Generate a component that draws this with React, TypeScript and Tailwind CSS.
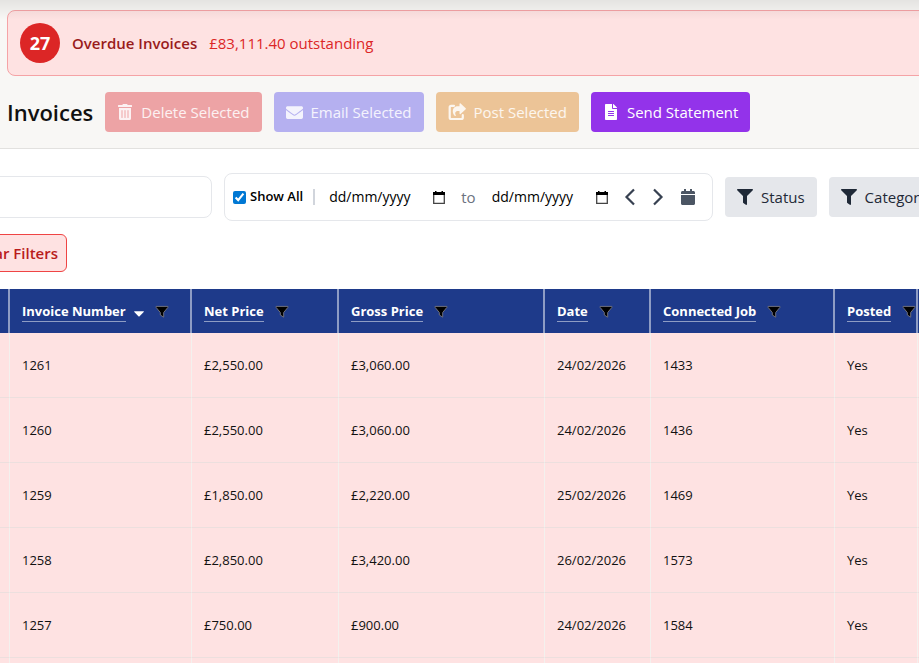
import { useState } from "react";
import { FaCalendar, FaEnvelope, FaFileAlt, FaFilter, FaTrashAlt } from "react-icons/fa";

const ShareIcon = ({ size }: { size: number }) => (
  <svg width={size} height={size} viewBox="0 0 18 18" className="block">
    <path
      d="M6 2.800H3.200a1.500 1.500 0 0 0-1.500 1.500v10.200a1.500 1.500 0 0 0 1.500 1.500h10.100a1.500 1.500 0 0 0 1.500-1.500v-2.300"
      fill="none"
      stroke="currentColor"
      strokeWidth="2.200"
      strokeLinecap="round"
    />
    <path
      d="M11.500 0.900c0-.6.700-.9 1.100-.5l5.100 4.800c.3.300.3.700 0 1l-5.100 4.800c-.4.400-1.100.1-1.100-.5V8.100H10c-2.400 0-3.500 1.700-2.200 4.300.2.500-.3.800-.7.500C5.700 11.900 4.800 10.200 4.800 8.400c0-3.200 2.200-5.100 5.200-5.100h1.500z"
      fill="currentColor"
    />
  </svg>
);

const actions = [
  { label: "Delete Selected", icon: FaTrashAlt, size: 16, color: "bg-[#eda3a5] text-white/85", disabled: true },
  { label: "Email Selected", icon: FaEnvelope, size: 17, color: "bg-[#b5b0f0] text-white/85", disabled: true },
  { label: "Post Selected", icon: ShareIcon, size: 18, color: "bg-[#ecc497] text-white/85", disabled: true },
  { label: "Send Statement", icon: FaFileAlt, size: 16, color: "bg-[#9333ea] text-white", disabled: false },
];

const columns = ["Invoice Number", "Net Price", "Gross Price", "Date", "Connected Job", "Posted"];

const invoices = [
  ["1261", "£2,550.00", "£3,060.00", "24/02/2026", "1433", "Yes"],
  ["1260", "£2,550.00", "£3,060.00", "24/02/2026", "1436", "Yes"],
  ["1259", "£1,850.00", "£2,220.00", "25/02/2026", "1469", "Yes"],
  ["1258", "£2,850.00", "£3,420.00", "26/02/2026", "1573", "Yes"],
  ["1257", "£750.00", "£900.00", "24/02/2026", "1584", "Yes"],
  ["", "", "", "", "", ""],
];

const ColumnFilterIcon = () => (
  <svg width="14" height="14" viewBox="0 0 14 14" className="block">
    <path
      d="M1.100 1.400h11.800v1L8.700 7.500v4.700L5.300 10V7.500L1.100 2.400z"
      fill="#000"
      stroke="#6f6f7a"
      strokeWidth="1"
      strokeLinejoin="round"
    />
  </svg>
);

const DateField = ({ label }: { label: string }) => {
  const [value, setValue] = useState("");

  return (
    <div className="flex w-[116px] items-center justify-between">
      <input
        type="text"
        aria-label={label}
        placeholder="dd/mm/yyyy"
        value={value}
        onChange={(e) => setValue(e.target.value)}
        className="w-[92px] text-sm text-black outline-none placeholder:text-black"
      />
      <button type="button" aria-label={`Pick ${label}`}>
        <svg width="12" height="13" viewBox="0 0 12 13" className="block">
          <path d="M.7 3v9.300h10.600V3" fill="#fff" stroke="#444" strokeWidth="1.300" />
          <path d="M2 0h1.500v1H8.500V0H10v1h2v3H0V1h2z" fill="#000" />
        </svg>
      </button>
    </div>
  );
};

const App = () => {
  const [showAll, setShowAll] = useState(true);

  return (
    <div className="relative h-screen overflow-hidden bg-white font-['Open_Sans','Noto_Sans',sans-serif] text-[15px] text-[#111]">
      <header className="border-b border-[#e2e1df] bg-[#f8f7f5] pt-[10px] pb-4 pl-[7px]">
        <div className="-mr-4 flex h-[66px] items-center rounded-lg border border-[#f5a3a6] bg-[#fee2e2] px-3">
          <span className="flex size-10 items-center justify-center rounded-full bg-[#dc2626] text-lg font-bold text-white">
            27
          </span>
          <span className="ml-3 font-semibold text-[#991b1b]">Overdue Invoices</span>
          <span className="ml-3 text-[#dc2626]">£83,111.40 outstanding</span>
        </div>
        <div className="mt-4 flex items-center gap-3">
          <h1 className="text-[22px] font-semibold">Invoices</h1>
          {actions.map(({ label, icon: Icon, size, color, disabled }) => (
            <button
              key={label}
              type="button"
              disabled={disabled}
              className={`flex h-10 shrink-0 items-center gap-2 rounded px-3 whitespace-nowrap ${color}`}
            >
              <Icon size={size} />
              {label}
            </button>
          ))}
        </div>
      </header>

      {/* shadow cast by the bar above the page */}
      <div className="pointer-events-none absolute inset-x-0 top-0 h-5 bg-linear-to-b from-black/8 to-transparent" />

      <section className="-ml-[38px] pt-6">
        <div className="flex items-center gap-3">
          <input
            type="search"
            aria-label="Search invoices"
            className="h-[42px] w-[250px] shrink-0 rounded-lg border border-[#e5e7eb] px-3 outline-none"
          />
          <div className="flex h-12 w-[489px] shrink-0 items-center rounded-lg border border-[#e5e7eb] px-2">
            <label className="flex items-center gap-1 text-[13px] font-semibold whitespace-nowrap text-black">
              <input
                type="checkbox"
                checked={showAll}
                onChange={(e) => setShowAll(e.target.checked)}
                className="size-[13px] accent-[#0078d4]"
              />
              Show All
            </label>
            <span className="mx-2.5 h-4 w-0.5 bg-gray-300" />
            <div className="ml-1 flex flex-1 items-center justify-between pr-2">
              <DateField label="start date" />
              <span className="text-[#6b7280]">to</span>
              <DateField label="end date" />
              <button type="button" aria-label="Previous" className="text-[#374151]">
                <svg width="12" height="18" viewBox="0 0 12 18" className="block">
                  <path d="M10 1.500 2.500 9l7.500 7.500" fill="none" stroke="currentColor" strokeWidth="2.200" />
                </svg>
              </button>
              <button type="button" aria-label="Next" className="text-[#374151]">
                <svg width="12" height="18" viewBox="0 0 12 18" className="block">
                  <path d="M2 1.500 9.500 9 2 16.500" fill="none" stroke="currentColor" strokeWidth="2.200" />
                </svg>
              </button>
              <button type="button" aria-label="Calendar" className="text-[#4b5563]">
                <FaCalendar size={16} />
              </button>
            </div>
          </div>
          {["Status", "Category"].map((name) => (
            <button
              key={name}
              type="button"
              className="flex h-10 shrink-0 items-center gap-2 rounded bg-[#e5e7eb] px-3 text-[#1f2937]"
            >
              <FaFilter size={16} />
              {name}
            </button>
          ))}
        </div>
        <button
          type="button"
          className="mt-[13px] flex h-[38px] w-[105px] items-center justify-end rounded-md border border-[#ef4444] bg-[#fee2e2] pr-2 font-semibold whitespace-nowrap text-[#b91c1c]"
        >
          Clear Filters
        </button>
      </section>

      <table className="mt-[17px] w-[1100px] table-fixed border-separate border-spacing-0 text-left text-[13px]">
        <colgroup>
          <col className="w-[10px]" />
          <col className="w-[182px]" />
          <col className="w-[147px]" />
          <col className="w-[206px]" />
          <col className="w-[106px]" />
          <col className="w-[184px]" />
          <col className="w-[83px]" />
          <col />
        </colgroup>
        <thead>
          <tr className="h-11 bg-[#1e3a8a] text-white">
            <td className="border-r-2 border-[#8e9cc4]" />
            {columns.map((name, i) => (
              <th key={name} className="border-r-2 border-[#8e9cc4] pt-0.5 pl-3 font-bold whitespace-nowrap">
                <div className="flex items-center">
                  <a href="#" className="border-b border-[#8e9cc4]">
                    {name}
                    {i === 0 && " "}
                  </a>
                  {i === 0 && (
                    <svg width="10" height="6" viewBox="0 0 10 6" className="mt-1 ml-2 block">
                      <path d="M.5.300h9c.4 0 .5.400.2.700L5.600 5.300c-.3.400-.9.400-1.200 0L.3 1C0 .700.100.300.500.300z" fill="#fff" />
                    </svg>
                  )}
                  <button type="button" aria-label={`Filter ${name}`} className="ml-[11px]">
                    <ColumnFilterIcon />
                  </button>
                </div>
              </th>
            ))}
            <td />
          </tr>
        </thead>
        <tbody>
          {invoices.map((row, r) => (
            <tr key={r} className="h-[65px] bg-[#fee2e2]">
              <td className="border-r border-b border-r-[#f3f1ee] border-b-[#ecdfde]" />
              {row.map((cell, i) => (
                <td key={i} className="border-r border-b border-r-[#f3f1ee] border-b-[#ecdfde] pt-0.5 pl-3">
                  {cell}
                </td>
              ))}
              <td className="border-b border-[#ecdfde]" />
            </tr>
          ))}
        </tbody>
      </table>
    </div>
  );
};

export default App;
